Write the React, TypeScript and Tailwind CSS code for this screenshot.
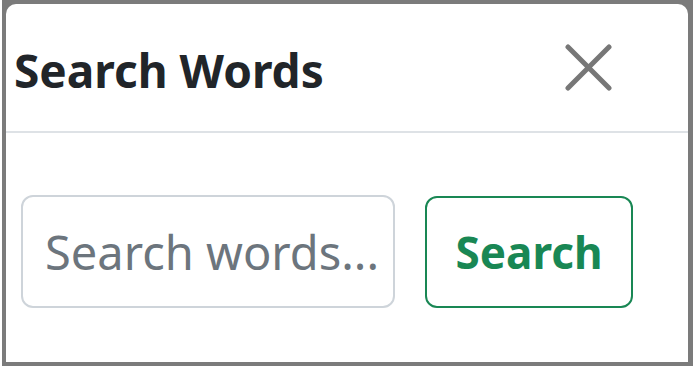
export default function App() {
  return (
    <div className="w-[698px] h-[372px] bg-white overflow-hidden">
      <div className="ml-[2px] w-[691px] h-[366px] bg-[#7b7b7b] pt-[4px] pl-[4px] pr-[5px] pb-[4px]">
        <div
          className="h-full bg-white rounded-t-[10px] flex flex-col"
          style={{ fontFamily: '"Noto Sans", "Open Sans", sans-serif' }}
        >
          <div className="h-[129px] flex items-center justify-between border-b-2 border-[#dee2e6] pl-[8px] pr-[76px] pt-[4px]">
            <h5 className="text-[46px] font-bold text-[#212529] leading-none">Search Words</h5>
            <button className="w-[47px] h-[47px] flex items-center justify-center -mt-[4px]">
              <svg width="47" height="47" viewBox="0 0 47 47">
                <path
                  d="M3 3 L44 44 M44 3 L3 44"
                  stroke="#777777"
                  strokeWidth="5"
                  strokeLinecap="round"
                  fill="none"
                />
              </svg>
            </button>
          </div>
          <div className="flex items-center gap-[30px] pl-[15px] pt-[62px]">
            <input
              type="text"
              placeholder="Search words..."
              className="w-[374px] h-[113px] rounded-[12px] border-2 border-[#ced4da] pl-[22px] pr-[4px] text-[47px] text-[#212529] placeholder:text-[#6c757d] outline-none"
              style={{ fontFamily: '"Noto Sans", "Open Sans", sans-serif' }}
            />
            <button
              className="w-[208px] h-[112px] rounded-[12px] border-2 border-[#198754] text-[#198754] text-[44px] font-bold"
              style={{ fontFamily: '"Noto Sans", "Open Sans", sans-serif' }}
            >
              Search
            </button>
          </div>
        </div>
      </div>
    </div>
  );
}
